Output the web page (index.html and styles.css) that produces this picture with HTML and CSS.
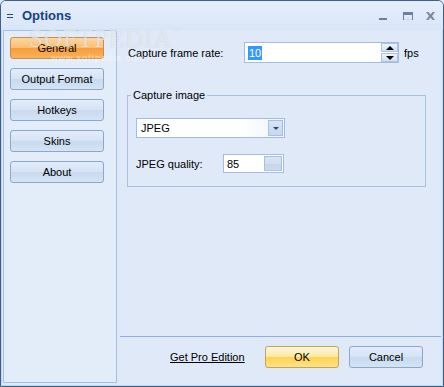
FILE: index.html
```html
<!DOCTYPE html>
<html lang="en">
<head>
    <meta charset="UTF-8">
    <title>Options</title>
    <link rel="stylesheet" href="styles.css">
</head>
<body>
    <div class="window">
        <div class="titlebar">
            <svg class="sys-icon" width="6" height="6" viewBox="0 0 6 6">
                <rect x="0" y="1" width="6" height="1" fill="#32476a"/>
                <rect x="0" y="4" width="6" height="1" fill="#32476a"/>
            </svg>
            <span class="title">Options</span>
            <div class="controls">
                <svg class="ctl-min" width="8" height="8" viewBox="0 0 8 8">
                    <rect x="0" y="6" width="8" height="2" fill="#6f7f96"/>
                </svg>
                <svg class="ctl-max" width="10" height="8" viewBox="0 0 10 8">
                    <rect x="0.5" y="0.5" width="9" height="7" fill="none" stroke="#6f7f96"/>
                    <rect x="0" y="0" width="10" height="3" fill="#6f7f96"/>
                    <rect x="1" y="7" width="8" height="1" fill="#c9d6e8"/>
                </svg>
                <svg class="ctl-close" width="9" height="8" viewBox="0 0 9 8">
                    <path d="M0 0h2.5l2 2.5 2-2.5H9L6 4l3 4H6.5l-2-2.5-2 2.5H0l3-4z" fill="#7a899e"/>
                </svg>
            </div>
        </div>

        <div class="content">
            <nav class="sidebar">
                <button class="nav-btn active">General</button>
                <button class="nav-btn">Output Format</button>
                <button class="nav-btn">Hotkeys</button>
                <button class="nav-btn">Skins</button>
                <button class="nav-btn">About</button>
            </nav>

            <main class="panel">
                <div class="rate-row">
                    <label class="rate-label">Capture frame rate:</label>
                    <div class="spin-box">
                        <span class="selected">10</span>
                        <div class="spinner">
                            <span class="spin-btn"><i class="arrow-up"></i></span>
                            <span class="spin-btn"><i class="arrow-down"></i></span>
                        </div>
                    </div>
                    <span class="unit">fps</span>
                </div>

                <fieldset class="group">
                    <legend>Capture image</legend>
                    <div class="combo">
                        <span>JPEG</span>
                        <span class="combo-btn"><i class="combo-arrow"></i></span>
                    </div>
                    <div class="quality-row">
                        <label class="quality-label">JPEG quality:</label>
                        <div class="quality-box">
                            <span>85</span>
                            <span class="quality-btn"></span>
                        </div>
                    </div>
                </fieldset>

                <div class="spacer"></div>

                <div class="footer">
                    <a class="pro-link" href="#">Get Pro Edition</a>
                    <button class="dlg-btn ok-btn">OK</button>
                    <button class="dlg-btn">Cancel</button>
                </div>
            </main>
        </div>

        <div class="watermark">SOFTPEDIA<sup>™</sup></div>
        <div class="watermark-url">www.softpedia.com</div>
    </div>
</body>
</html>
```

FILE: styles.css
```css
body {
    margin: 0;
    font-family: 'Liberation Sans', Arial, sans-serif;
    font-size: 11px;
    color: #000;
    background: #dfe9f7;
}
.window {
    width: 444px;
    height: 387px;
    box-sizing: border-box;
    border: 1px solid #3e5e8e;
    border-radius: 6px 6px 0 0;
    background: #dfe9f7;
    display: flex;
    flex-direction: column;
    position: relative;
    overflow: hidden;
    box-shadow: inset 0 0 0 1px #c4d5ec;
}
.titlebar {
    height: 29px;
    flex: none;
    display: flex;
    align-items: center;
    padding: 0 8px 0 6px;
    background: linear-gradient(#e5eefb, #d9e6f7);
}
.sys-icon {
    display: block;
}
.title {
    margin-left: 9px;
    font-size: 13px;
    font-weight: bold;
    color: #15428b;
}
.controls {
    margin-left: auto;
    display: flex;
    align-items: center;
}
.controls svg {
    display: block;
}
.ctl-max {
    margin-left: 16px;
}
.ctl-close {
    margin-left: 13px;
}
.content {
    flex: 1;
    display: flex;
    min-height: 0;
}
.sidebar {
    width: 114px;
    flex: none;
    box-sizing: border-box;
    margin: 0 0 3px 2px;
    padding: 6px 0 0 6px;
    border: 1px solid #a7c0e2;
    background: #e3edfa;
    display: flex;
    flex-direction: column;
    gap: 9px;
}
.nav-btn {
    width: 94px;
    height: 22px;
    padding: 0;
    border: 1px solid #8aa7cc;
    border-radius: 3px;
    font: inherit;
    color: #000;
    background: linear-gradient(#e3ecf9, #d6e3f5 50%, #c8daf0 51%, #d5e3f5);
}
.nav-btn.active {
    border-color: #c48d52;
    background: linear-gradient(#fcd7a2, #fbbd72 50%, #f89c3a 51%, #fbb259);
}
.panel {
    flex: 1;
    display: flex;
    flex-direction: column;
    min-width: 0;
}
.rate-row {
    display: flex;
    align-items: center;
    margin: 12px 0 0 11px;
}
.rate-label {
    width: 116px;
}
.spin-box {
    width: 155px;
    height: 21px;
    box-sizing: border-box;
    border: 1px solid #a3bde2;
    background: #fff;
    display: flex;
    align-items: center;
    padding-left: 3px;
}
.selected {
    background: #3399ff;
    color: #fff;
    line-height: 14px;
    padding: 0 1px;
}
.spinner {
    margin-left: auto;
    width: 17px;
    height: 19px;
    display: flex;
    flex-direction: column;
    gap: 1px;
}
.spin-btn {
    flex: 1;
    box-sizing: border-box;
    border: 1px solid #aec3e1;
    background: linear-gradient(#eef3fb, #d3e0f2);
    display: flex;
    align-items: center;
    justify-content: center;
}
.arrow-up {
    border-left: 4px solid transparent;
    border-right: 4px solid transparent;
    border-bottom: 4px solid #000;
}
.arrow-down {
    border-left: 4px solid transparent;
    border-right: 4px solid transparent;
    border-top: 4px solid #000;
}
.unit {
    margin-left: 5px;
}
.group {
    margin: 25px 17px 0 10px;
    padding: 16px 0 13px 8px;
    border: 1px solid #a7c0e2;
    min-width: 0;
}
.group legend {
    margin-left: -5px;
    padding: 0 2px;
    line-height: 14px;
}
.combo {
    width: 149px;
    height: 20px;
    box-sizing: border-box;
    border: 1px solid #a3bde2;
    background: linear-gradient(90deg, #fff 70%, #eef3fb);
    display: flex;
    align-items: center;
    padding-left: 4px;
}
.combo-btn {
    margin: 0 1px 0 auto;
    width: 15px;
    height: 16px;
    box-sizing: border-box;
    border: 1px solid #a9bfdf;
    background: linear-gradient(#d8e4f5, #c6d7ef);
    display: flex;
    align-items: center;
    justify-content: center;
}
.combo-arrow {
    border-left: 3px solid transparent;
    border-right: 3px solid transparent;
    border-top: 3px solid #2c4b7c;
}
.quality-row {
    display: flex;
    align-items: center;
    margin-top: 16px;
}
.quality-label {
    width: 87px;
}
.quality-box {
    width: 61px;
    height: 19px;
    box-sizing: border-box;
    border: 1px solid #a3bde2;
    background: #fff;
    display: flex;
    align-items: center;
    padding-left: 3px;
}
.quality-btn {
    margin: 0 1px 0 auto;
    width: 18px;
    height: 15px;
    box-sizing: border-box;
    border: 1px solid #a9bfdf;
    background: linear-gradient(#d9e5f5, #d2dff2 50%, #c4d6ee 51%, #cbdbf0);
}
.spacer {
    flex: 1;
}
.footer {
    margin: 0 2px 0 3px;
    padding: 9px 18px 18px 0;
    border-top: 1px solid #8fb0dc;
    display: flex;
    align-items: center;
}
.pro-link {
    margin: 0 auto 0 50px;
    color: #000;
    text-decoration: underline;
}
.dlg-btn {
    width: 74px;
    height: 22px;
    padding: 0;
    border: 1px solid #8aa7cc;
    border-radius: 3px;
    font: inherit;
    color: #000;
    background: linear-gradient(#e3ecf9, #d6e3f5 50%, #c8daf0 51%, #d5e3f5);
}
.dlg-btn + .dlg-btn {
    margin-left: 10px;
}
.ok-btn {
    border-color: #c6a35c;
    background: linear-gradient(#fff7d8, #ffe8a4 50%, #ffd34c 51%, #ffe28a);
}
.watermark {
    position: absolute;
    top: 24px;
    left: 28px;
    font-family: 'Liberation Serif', serif;
    font-size: 25px;
    letter-spacing: 1px;
    color: rgba(255, 255, 255, 0.55);
    text-shadow: 0 0 1px rgba(130, 140, 155, 0.35);
    pointer-events: none;
}
.watermark sup {
    font-size: 8px;
    vertical-align: 14px;
}
.watermark-url {
    position: absolute;
    top: 52px;
    left: 50px;
    font-size: 9px;
    letter-spacing: 1px;
    color: rgba(255, 255, 255, 0.5);
    pointer-events: none;
}
```
